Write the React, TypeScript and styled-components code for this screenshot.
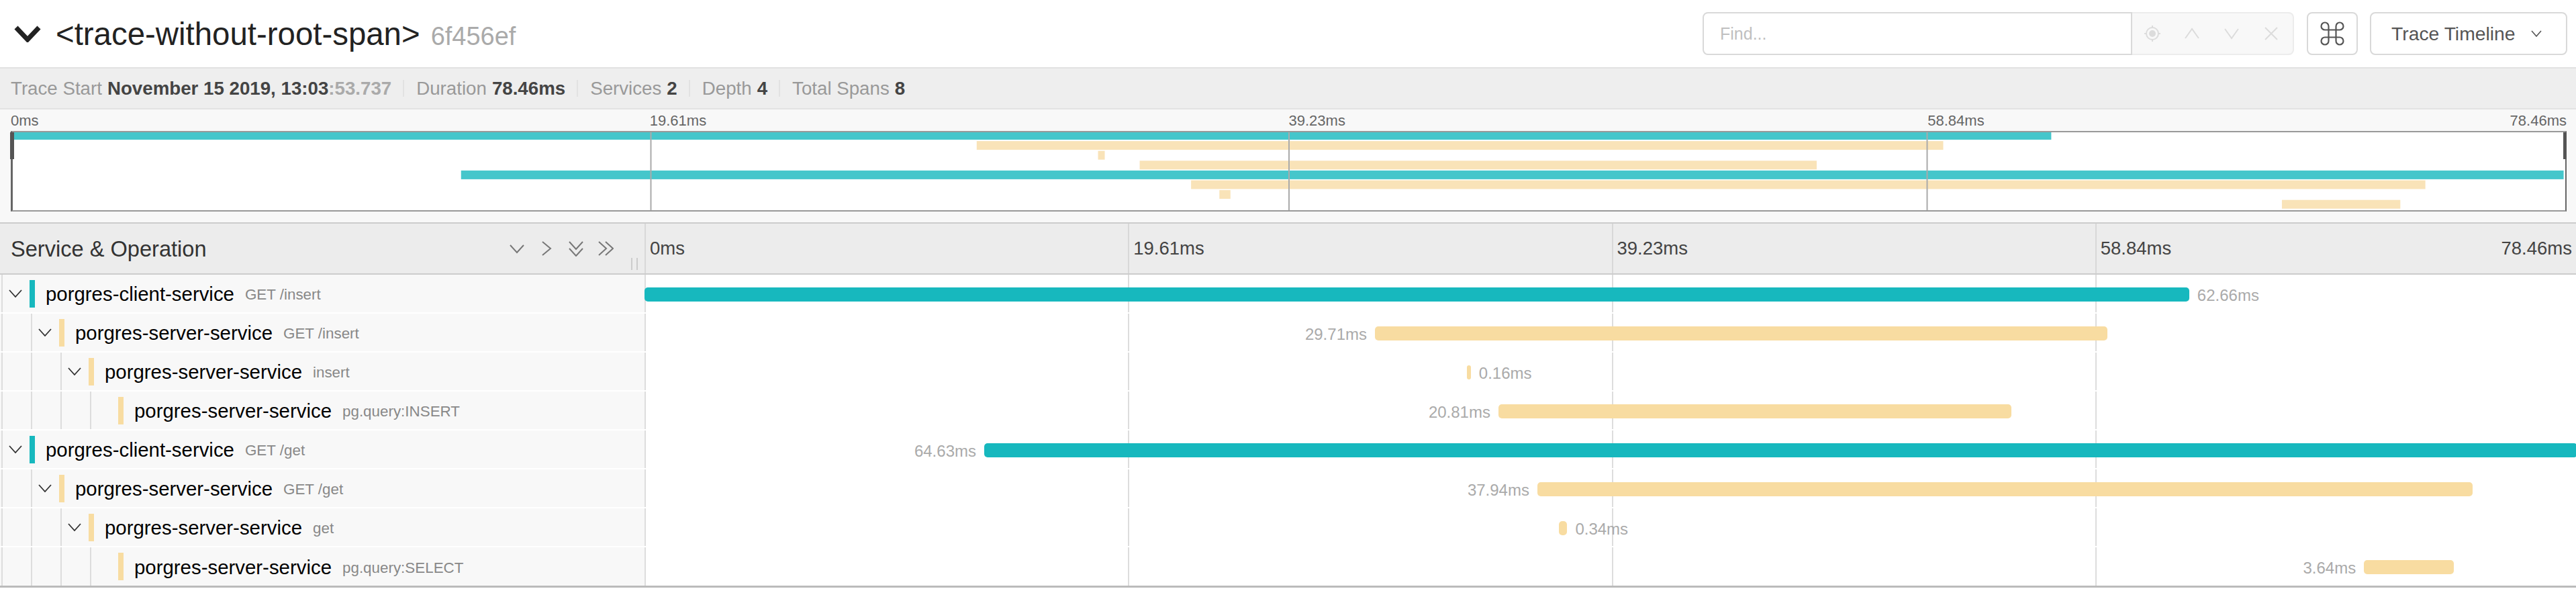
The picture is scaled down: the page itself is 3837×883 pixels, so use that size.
import React from 'react';
import styled, { createGlobalStyle } from 'styled-components';
import { Command } from 'lucide-react';

const GlobalStyle = createGlobalStyle`
	html, body {
		margin: 0;
		padding: 0;
		background: #fff;
		overflow: hidden;
		font-family: 'Liberation Sans', Arial, sans-serif;
	}
	* {
		box-sizing: border-box;
	}
`;

const TEAL = '#17b8be';
const PEACH = '#f8dca1';
const TOTAL_MS = 78.46;

type Span = {
	service: string;
	operation: string;
	level: number;
	start: number;
	duration: number;
	label: string;
	labelSide: 'left' | 'right';
	client: boolean;
	leaf?: boolean;
};

const spans: Span[] = [
	{ service: 'porgres-client-service', operation: 'GET /insert', level: 0, start: 0, duration: 62.66, label: '62.66ms', labelSide: 'right', client: true },
	{ service: 'porgres-server-service', operation: 'GET /insert', level: 1, start: 29.63, duration: 29.71, label: '29.71ms', labelSide: 'left', client: false },
	{ service: 'porgres-server-service', operation: 'insert', level: 2, start: 33.36, duration: 0.16, label: '0.16ms', labelSide: 'right', client: false },
	{ service: 'porgres-server-service', operation: 'pg.query:INSERT', level: 3, start: 34.64, duration: 20.81, label: '20.81ms', labelSide: 'left', client: false, leaf: true },
	{ service: 'porgres-client-service', operation: 'GET /get', level: 0, start: 13.78, duration: 64.63, label: '64.63ms', labelSide: 'left', client: true },
	{ service: 'porgres-server-service', operation: 'GET /get', level: 1, start: 36.22, duration: 37.94, label: '37.94ms', labelSide: 'left', client: false },
	{ service: 'porgres-server-service', operation: 'get', level: 2, start: 37.09, duration: 0.34, label: '0.34ms', labelSide: 'right', client: false },
	{ service: 'porgres-server-service', operation: 'pg.query:SELECT', level: 3, start: 69.75, duration: 3.64, label: '3.64ms', labelSide: 'left', client: false, leaf: true },
];

const tickLabels = ['0ms', '19.61ms', '39.23ms', '58.84ms'];
const tickOffsets = [0, 25, 50, 75];

const Page = styled.div`
	width: 3837px;
	height: 883px;
	overflow: hidden;
	background: #fff;
`;

const TitleBar = styled.header`
	display: flex;
	align-items: center;
	height: 102px;
	padding: 0 13px 0 21px;
	border-bottom: 2px solid #e2e2e2;
`;

const TitleChevron = styled.svg`
	width: 40px;
	height: 26px;
	margin-right: 22px;
	flex: none;
`;

const TraceName = styled.h1`
	margin: 0;
	font-size: 47.4px;
	font-weight: 400;
	color: #222;
	white-space: nowrap;
`;

const TraceId = styled.small`
	margin-left: 16px;
	font-size: 38px;
	color: #aaa;
`;

const Controls = styled.div`
	display: flex;
	align-items: stretch;
	height: 64px;
	margin-left: auto;
`;

const SearchInput = styled.input`
	width: 640px;
	height: 100%;
	padding: 0 24px;
	border: 2px solid #d9d9d9;
	border-radius: 8px 0 0 8px;
	font-family: 'Liberation Sans', Arial, sans-serif;
	font-size: 25px;
	outline: none;
	&::placeholder {
		color: #bfbfbf;
	}
`;

const SearchActions = styled.div`
	display: flex;
	align-items: center;
	justify-content: space-between;
	width: 241px;
	padding: 0 20px 0 18px;
	background: #f8f8f8;
	border: 2px solid #ececec;
	border-left: none;
	border-radius: 0 8px 8px 0;
	margin-right: 19px;
`;

const ActionIcon = styled.svg`
	width: 24px;
	height: 24px;
	fill: none;
	stroke: #dcdcdc;
	stroke-width: 2;
`;

const CommandButton = styled.div`
	display: flex;
	align-items: center;
	justify-content: center;
	width: 76px;
	margin-right: 18px;
	border: 2px solid #d9d9d9;
	border-radius: 8px;
	color: #555;
`;

const ViewButton = styled.div`
	display: flex;
	align-items: center;
	justify-content: space-between;
	width: 294px;
	padding: 0 36px 0 30px;
	border: 2px solid #d9d9d9;
	border-radius: 8px;
	font-size: 28.3px;
	color: #555;
`;

const ViewChevron = styled.svg`
	width: 16px;
	height: 10px;
	fill: none;
	stroke: #555;
	stroke-width: 1.6;
`;

const StatsBar = styled.div`
	display: flex;
	align-items: center;
	height: 61px;
	padding-left: 16px;
	background: #eee;
	border-bottom: 2px solid #e2e2e2;
`;

const Stat = styled.div`
	display: flex;
	align-items: center;
	height: 25px;
	padding: 0 17px 0 18px;
	border-left: 2px solid #e2e2e2;
	font-size: 27.7px;
	color: #999;
	white-space: pre;
	&:first-child {
		padding-left: 0;
		border-left: none;
	}
`;

const StatValue = styled.strong`
	margin-left: 8px;
	color: #444;
`;

const FadedSeconds = styled.span`
	color: #aaa;
`;

const MinimapSection = styled.section`
	height: 170px;
	padding: 2px 14px 0 16px;
	background: #f8f8f8;
	border-bottom: 2px solid #ccc;
`;

const TickRow = styled.div`
	display: grid;
	grid-template-columns: repeat(4, 1fr);
	height: 30px;
	align-items: center;
	font-size: 22px;
	color: #666;
`;

const TickCell = styled.div`
	display: flex;
	justify-content: space-between;
`;

const MinimapCanvas = styled.div`
	height: 120px;
	background: #fff;
	border: 2px solid #999;
	border-left: 3px solid #666;
	border-right-color: #666;
`;

const MinimapDrawing = styled.svg`
	display: block;
	width: 100%;
	height: 100%;
	overflow: visible;
`;

const TimelineHeader = styled.div`
	display: flex;
	height: 76px;
	background: #ececec;
	border-bottom: 2px solid #ccc;
`;

const HeaderLeft = styled.div`
	position: relative;
	display: flex;
	align-items: center;
	justify-content: space-between;
	flex: 0 0 960px;
	padding: 0 46px 0 16px;
`;

const HeaderTitle = styled.h2`
	margin: 2px 0 0;
	font-size: 32.6px;
	font-weight: 400;
	color: #333;
`;

const CollapseIcons = styled.div`
	display: flex;
	align-items: center;
	gap: 20px;
`;

const CollapseIcon = styled.svg`
	width: 24px;
	height: 24px;
	fill: none;
	stroke: #777;
	stroke-width: 2;
`;

const DragGrip = styled.div`
	position: absolute;
	right: 10px;
	bottom: 5px;
	width: 10px;
	height: 18px;
	border-left: 2px solid #ccc;
	border-right: 2px solid #ccc;
`;

const HeaderTicks = styled.div`
	display: grid;
	grid-template-columns: repeat(4, 1fr);
	flex: 0 0 2881px;
	font-size: 27.5px;
	color: #444;
`;

const HeaderTick = styled.div`
	display: flex;
	align-items: center;
	justify-content: space-between;
	padding: 0 10px 0 6px;
	border-left: 2px solid #d8d8d8;
`;

const RowList = styled.div`
	border-bottom: 3px solid #bbb;
	width: 3841px;
`;

const Row = styled.div`
	display: flex;
	height: 58px;
	border-bottom: 2px solid #fff;
	&:last-child {
		height: 57px;
		border-bottom: none;
	}
`;

const NameCell = styled.div`
	display: flex;
	align-items: stretch;
	flex: 0 0 960px;
	background: #f8f8f8;
`;

const IndentGuide = styled.div`
	display: flex;
	align-items: center;
	justify-content: center;
	flex: none;
	width: 42px;
	margin-left: 2px;
	border-left: 2px solid #ddd;
	padding-right: 2px;
`;

const RowChevron = styled.svg`
	width: 20px;
	height: 12px;
	fill: none;
	stroke: #333;
	stroke-width: 1.8;
`;

const ServiceBar = styled.div<{ $color: string }>`
	flex: none;
	width: 8px;
	height: 41px;
	margin: 8px 16px 0 0;
	background: ${(props) => props.$color};
`;

const ServiceName = styled.span`
	align-self: center;
	margin-top: 2px;
	font-size: 29.4px;
	color: #000;
	white-space: nowrap;
`;

const OperationName = styled.span`
	align-self: center;
	margin: 4px 0 0 16px;
	font-size: 22.4px;
	color: #888;
	white-space: nowrap;
`;

const TimelineCell = styled.div`
	position: relative;
	flex: 0 0 2881px;
	background: #fff;
`;

const RowTick = styled.div<{ $left: number }>`
	position: absolute;
	top: 0;
	bottom: 0;
	left: ${(props) => props.$left}%;
	width: 2px;
	background: #ddd;
`;

const SpanBar = styled.div<{ $color: string }>`
	position: absolute;
	top: 19px;
	height: 21px;
	border-radius: 5px;
	background: ${(props) => props.$color};
`;

const DurationLabel = styled.span<{ $side: 'left' | 'right' }>`
	position: absolute;
	top: 1px;
	${(props) =>
		props.$side === 'left' ? 'right: calc(100% + 12px);' : 'left: calc(100% + 12px);'}
	font-size: 24px;
	line-height: 21px;
	color: #aaa;
	white-space: nowrap;
`;

const Minimap: React.FC = () => {
	const width = 3802;
	return (
		<MinimapDrawing viewBox={`0 0 ${width} 116`} preserveAspectRatio="none">
			{spans.map((span, i) => {
				const x = (span.start / TOTAL_MS) * width;
				const w = Math.max((span.duration / TOTAL_MS) * width, 10);
				return (
					<rect
						key={i}
						x={x}
						y={Math.max(0, i * 14.6 - 1.5)}
						width={w}
						height={i === 0 ? 11 : 13}
						fill={span.client ? '#45c6cb' : '#f9e3b8'}
					/>
				);
			})}
			{[25, 50, 75].map((t) => (
				<rect key={t} x={(t / 100) * width - 1} y={0} width={2} height={116} fill="#aaa" />
			))}
			<rect x={-4} y={0} width={6} height={40} fill="#555" />
			<rect x={width - 3} y={0} width={5} height={40} fill="#555" />
		</MinimapDrawing>
	);
};

const App: React.FC = () => {
	return (
		<Page>
			<GlobalStyle />
			<TitleBar>
				<TitleChevron viewBox="0 0 40 26">
					<path d="M3 4 L20 22 L37 4" fill="none" stroke="#222" strokeWidth="7" />
				</TitleChevron>
				<TraceName>
					{'<trace-without-root-span>'}
					<TraceId>6f456ef</TraceId>
				</TraceName>
				<Controls>
					<SearchInput placeholder="Find..." readOnly />
					<SearchActions>
						<ActionIcon viewBox="0 0 24 24">
							<circle cx="12" cy="12" r="9" />
							<circle cx="12" cy="12" r="4" fill="#dcdcdc" />
							<path d="M12 0v3M12 21v3M0 12h3M21 12h3" />
						</ActionIcon>
						<ActionIcon viewBox="0 0 24 24">
							<path d="M2 19 L12 5 L22 19" />
						</ActionIcon>
						<ActionIcon viewBox="0 0 24 24">
							<path d="M2 5 L12 19 L22 5" />
						</ActionIcon>
						<ActionIcon viewBox="0 0 24 24">
							<path d="M3 3 L21 21 M21 3 L3 21" />
						</ActionIcon>
					</SearchActions>
					<CommandButton>
						<Command size={44} strokeWidth={1.2} />
					</CommandButton>
					<ViewButton>
						Trace Timeline
						<ViewChevron viewBox="0 0 16 10">
							<path d="M1 1 L8 9 L15 1" />
						</ViewChevron>
					</ViewButton>
				</Controls>
			</TitleBar>

			<StatsBar>
				<Stat>
					Trace Start
					<StatValue>
						November 15 2019, 13:03<FadedSeconds>:53.737</FadedSeconds>
					</StatValue>
				</Stat>
				<Stat>
					Duration<StatValue>78.46ms</StatValue>
				</Stat>
				<Stat>
					Services<StatValue>2</StatValue>
				</Stat>
				<Stat>
					Depth<StatValue>4</StatValue>
				</Stat>
				<Stat>
					Total Spans<StatValue>8</StatValue>
				</Stat>
			</StatsBar>

			<MinimapSection>
				<TickRow>
					{tickLabels.map((label, i) => (
						<TickCell key={label}>
							<span>{label}</span>
							{i === 3 && <span>78.46ms</span>}
						</TickCell>
					))}
				</TickRow>
				<MinimapCanvas>
					<Minimap />
				</MinimapCanvas>
			</MinimapSection>

			<TimelineHeader>
				<HeaderLeft>
					<HeaderTitle>Service &amp; Operation</HeaderTitle>
					<CollapseIcons>
						<CollapseIcon viewBox="0 0 24 24">
							<path d="M2 7 L12 18 L22 7" />
						</CollapseIcon>
						<CollapseIcon viewBox="0 0 24 24">
							<path d="M6 2 L18 12 L6 22" />
						</CollapseIcon>
						<CollapseIcon viewBox="0 0 24 24">
							<path d="M2 2 L12 13 L22 2 M2 12 L12 23 L22 12" />
						</CollapseIcon>
						<CollapseIcon viewBox="0 0 24 24">
							<path d="M2 2 L13 12 L2 22 M12 2 L23 12 L12 22" />
						</CollapseIcon>
					</CollapseIcons>
					<DragGrip />
				</HeaderLeft>
				<HeaderTicks>
					{tickLabels.map((label, i) => (
						<HeaderTick key={label}>
							<span>{label}</span>
							{i === 3 && <span>78.46ms</span>}
						</HeaderTick>
					))}
				</HeaderTicks>
			</TimelineHeader>

			<RowList>
				{spans.map((span, i) => {
					const color = span.client ? TEAL : PEACH;
					return (
						<Row key={i}>
							<NameCell>
								{Array.from({ length: span.level + 1 }).map((_, g) => (
									<IndentGuide key={g}>
										{g === span.level && !span.leaf && (
											<RowChevron viewBox="0 0 20 12">
												<path d="M1 1 L10 11 L19 1" />
											</RowChevron>
										)}
									</IndentGuide>
								))}
								<ServiceBar $color={color} />
								<ServiceName>{span.service}</ServiceName>
								<OperationName>{span.operation}</OperationName>
							</NameCell>
							<TimelineCell>
								{tickOffsets.map((t) => (
									<RowTick key={t} $left={t} />
								))}
								<SpanBar
									$color={color}
									style={{
										left: `${(span.start / TOTAL_MS) * 100}%`,
										width: `${(span.duration / TOTAL_MS) * 100}%`,
									}}
								>
									<DurationLabel $side={span.labelSide}>{span.label}</DurationLabel>
								</SpanBar>
							</TimelineCell>
						</Row>
					);
				})}
			</RowList>
		</Page>
	);
};

export default App;
